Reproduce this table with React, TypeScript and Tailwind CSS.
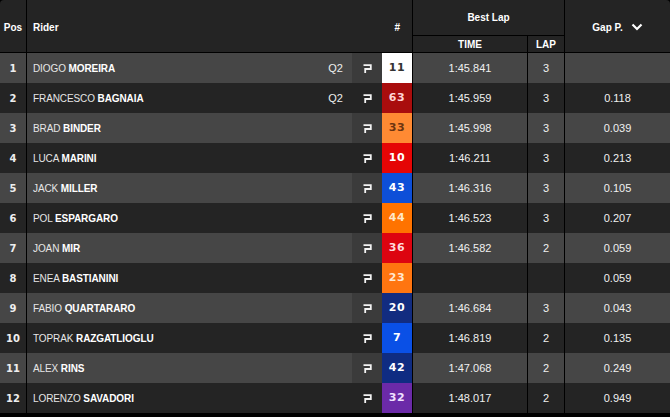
import React from "react";

type Row = {
  pos: number;
  first: string;
  last: string;
  q2?: boolean;
  num: string;
  bg: string;
  fg: string;
  time?: string;
  lap?: string;
  gap?: string;
};

const rows: Row[] = [
  { pos: 1, first: "DIOGO", last: "MOREIRA", q2: true, num: "11", bg: "bg-white", fg: "text-[#333]", time: "1:45.841", lap: "3" },
  { pos: 2, first: "FRANCESCO", last: "BAGNAIA", q2: true, num: "63", bg: "bg-[#a90d0d]", fg: "text-[#ffd6d6]", time: "1:45.959", lap: "3", gap: "0.118" },
  { pos: 3, first: "BRAD", last: "BINDER", num: "33", bg: "bg-[#ff8a33]", fg: "text-[#6b3410]", time: "1:45.998", lap: "3", gap: "0.039" },
  { pos: 4, first: "LUCA", last: "MARINI", num: "10", bg: "bg-[#e50505]", fg: "text-white", time: "1:46.211", lap: "3", gap: "0.213" },
  { pos: 5, first: "JACK", last: "MILLER", num: "43", bg: "bg-[#0d4fd8]", fg: "text-white", time: "1:46.316", lap: "3", gap: "0.105" },
  { pos: 6, first: "POL", last: "ESPARGARO", num: "44", bg: "bg-[#ff7300]", fg: "text-[#ffe8c8]", time: "1:46.523", lap: "3", gap: "0.207" },
  { pos: 7, first: "JOAN", last: "MIR", num: "36", bg: "bg-[#dd0410]", fg: "text-[#ffd8dc]", time: "1:46.582", lap: "2", gap: "0.059" },
  { pos: 8, first: "ENEA", last: "BASTIANINI", num: "23", bg: "bg-[#ff7510]", fg: "text-[#ffe8d0]", gap: "0.059" },
  { pos: 9, first: "FABIO", last: "QUARTARARO", num: "20", bg: "bg-[#122c80]", fg: "text-white", time: "1:46.684", lap: "3", gap: "0.043" },
  { pos: 10, first: "TOPRAK", last: "RAZGATLIOGLU", num: "7", bg: "bg-[#0a50e6]", fg: "text-white", time: "1:46.819", lap: "2", gap: "0.135" },
  { pos: 11, first: "ALEX", last: "RINS", num: "42", bg: "bg-[#0f2c82]", fg: "text-white", time: "1:47.068", lap: "2", gap: "0.249" },
  { pos: 12, first: "LORENZO", last: "SAVADORI", num: "32", bg: "bg-[#6b2aa8]", fg: "text-[#f0e0ff]", time: "1:48.017", lap: "2", gap: "0.949" },
];

const numFont = { fontFamily: '"DejaVu Sans", sans-serif' };

function PitIcon() {
  return (
    <svg width="9" height="9" viewBox="0 0 9 9" fill="none" stroke="#f2f2f2" strokeWidth="1.8">
      <path d="M0.5 1.2 H7.8 V5 H2.2 V9" strokeLinejoin="miter" />
    </svg>
  );
}

export default function App() {
  return (
    <div
      className="w-[670px] h-[417px] bg-black overflow-hidden text-white"
      style={{ fontFamily: '"Liberation Sans", Arial, sans-serif' }}
    >
      <div className="rounded-t-[4px] overflow-hidden">
        {/* header */}
        <div className="flex h-[53px] bg-[#242424] border-b border-black text-[10px] font-bold">
          <div className="w-[27px] border-r border-black flex items-center justify-center pt-[2px]">Pos</div>
          <div className="w-[386px] border-r border-black flex items-center pl-[6px] pr-[10px] pt-[2px]">
            <span className="flex-1">Rider</span>
            <span className="pr-[2px]">#</span>
          </div>
          <div className="w-[152px] border-r border-black flex flex-col">
            <div className="h-[36px] border-b border-black flex items-center justify-center">Best Lap</div>
            <div className="flex flex-1">
              <div className="w-[115px] border-r border-black flex items-center justify-center">TIME</div>
              <div className="flex-1 flex items-center justify-center">LAP</div>
            </div>
          </div>
          <div className="flex-1 flex items-center justify-center gap-[8px] pt-[2px]">
            <span>Gap P.</span>
            <svg width="12" height="8" viewBox="0 0 12 8" fill="none" stroke="white" strokeWidth="2.2">
              <path d="M1.5 1.5 L6 6 L10.5 1.5" />
            </svg>
          </div>
        </div>
        {/* rows */}
        {rows.map((r, i) => {
          const light = i % 2 === 0;
          return (
            <div
              key={r.pos}
              className={`flex h-[30px] text-[11px] ${light ? "bg-[#464646]" : "bg-[#242424]"}`}
            >
              <div
                className="w-[27px] border-r border-black flex items-center justify-center text-[10px] font-bold text-[#eee]"
                style={numFont}
              >
                {r.pos}
              </div>
              <div className="w-[325px] flex items-center pl-[6px] pr-[9px] text-[10px]">
                <span className="flex-1 tracking-[-0.1px]">
                  <span className="text-[#e6e6e6]">{r.first}</span>{" "}
                  <span className="font-bold">{r.last}</span>
                </span>
                {r.q2 && <span className="text-[11px] text-[#eee]">Q2</span>}
              </div>
              <div className={`w-[30px] flex items-center justify-center ${light ? "bg-[#3b3b3b]" : "bg-[#242424]"}`}>
                <PitIcon />
              </div>
              <div
                className={`w-[31px] border-r border-black flex items-center justify-center text-[11px] font-bold tracking-[0.5px] ${r.bg} ${r.fg}`}
                style={numFont}
              >
                {r.num}
              </div>
              <div className="w-[115px] border-r border-black flex items-center justify-center text-[#f0f0f0]">
                {r.time}
              </div>
              <div className="w-[37px] border-r border-black flex items-center justify-center text-[#f0f0f0]">
                {r.lap}
              </div>
              <div className="flex-1 flex items-center justify-center text-[#f0f0f0]">{r.gap}</div>
            </div>
          );
        })}
      </div>
    </div>
  );
}
